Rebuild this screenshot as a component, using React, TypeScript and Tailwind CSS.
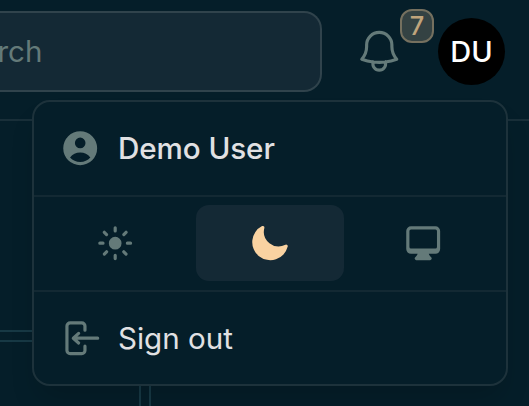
import type { ReactNode } from "react";

function MiniIcon({ children, className = "" }: { children: ReactNode; className?: string }) {
  return (
    <svg viewBox="0 0 20 20" fill="currentColor" className={`size-[42.4px] shrink-0 ${className}`} aria-hidden="true">
      {children}
    </svg>
  );
}

function Header() {
  return (
    <header className="flex h-[121px] items-start border-b-2 border-[#192f39] pt-[11px]">
      <div className="flex h-[81px] w-[322px] shrink-0 items-center rounded-r-[18px] border-y-2 border-r-2 border-[#30434c] bg-[#142935]">
        <span className="-ml-[60px] -mt-px w-[102.5px] text-right text-[29.6px] leading-10 text-[#647a79]">Search</span>
      </div>
      <button className="relative ml-[32px] mt-[15px] size-[50.5px] shrink-0 text-[#647a79]" aria-label="Notifications">
        <svg viewBox="0 0 24 24" fill="none" stroke="currentColor" strokeWidth="1.5" strokeLinecap="round" strokeLinejoin="round" className="size-full">
          <path d="M14.857 17.082a23.848 23.848 0 0 0 5.454-1.31A8.967 8.967 0 0 1 18 9.75V9A6 6 0 0 0 6 9v.75a8.967 8.967 0 0 1-2.312 6.022c1.733.64 3.56 1.085 5.455 1.31m5.714 0a24.255 24.255 0 0 1-5.714 0m5.714 0a3 3 0 1 1-5.714 0" />
        </svg>
        <span className="absolute -top-[17px] left-[46px] flex h-[34px] w-[34px] items-center justify-center rounded-[12px] border-2 border-[#75705f] bg-[#344243] text-[25.4px] font-medium leading-none text-[#c0a47c]">
          7
        </span>
      </button>
      <div className="ml-[33.5px] mt-[7px] flex size-[67px] shrink-0 items-center justify-center rounded-full bg-black text-[29px] font-medium text-white">
        DU
      </div>
    </header>
  );
}

function UserMenu() {
  return (
    <div className="absolute left-[31.5px] top-[100px] flex h-[286px] w-[476px] flex-col rounded-[18px] border-2 border-[#1d323b] bg-[#051e29] text-[29.6px] text-[#e1e1e3] shadow-[0_18px_28px_-6px_rgba(0,0,0,0.16)]">
      <div className="flex h-[93px] items-center gap-[17px] pl-[25px]">
        <MiniIcon className="text-[#647a79]">
          <path fillRule="evenodd" d="M18 10a8 8 0 1 1-16 0 8 8 0 0 1 16 0Zm-5.5-2.5a2.5 2.5 0 1 1-5 0 2.5 2.5 0 0 1 5 0ZM10 12a5.99 5.99 0 0 0-4.793 2.39A6.483 6.483 0 0 0 10 16.5a6.483 6.483 0 0 0 4.793-2.11A5.99 5.99 0 0 0 10 12Z" />
        </MiniIcon>
        <span className="font-medium tracking-[-0.06px]">Demo User</span>
      </div>
      <div className="grid h-[97px] grid-cols-3 gap-[6px] border-y-2 border-[#132933] px-[8px] pb-[9px] pt-[8px] text-[#647a79]">
        <button className="flex items-center justify-center rounded-[13px]" aria-label="Light theme">
          <MiniIcon>
            <path d="M10 2a.75.75 0 0 1 .75.75v1.5a.75.75 0 0 1-1.5 0v-1.5A.75.75 0 0 1 10 2ZM10 15a.75.75 0 0 1 .75.75v1.5a.75.75 0 0 1-1.5 0v-1.5A.75.75 0 0 1 10 15ZM10 7a3 3 0 1 0 0 6 3 3 0 0 0 0-6ZM15.657 5.404a.75.75 0 1 0-1.06-1.06l-1.061 1.06a.75.75 0 0 0 1.06 1.06l1.06-1.06ZM6.464 14.596a.75.75 0 1 0-1.06-1.06l-1.06 1.06a.75.75 0 0 0 1.06 1.06l1.06-1.06ZM18 10a.75.75 0 0 1-.75.75h-1.5a.75.75 0 0 1 0-1.5h1.5A.75.75 0 0 1 18 10ZM5 10a.75.75 0 0 1-.75.75h-1.5a.75.75 0 0 1 0-1.5h1.5A.75.75 0 0 1 5 10ZM14.596 15.657a.75.75 0 0 0 1.06-1.06l-1.06-1.061a.75.75 0 1 0-1.06 1.06l1.06 1.06ZM5.404 6.464a.75.75 0 0 0 1.06-1.06l-1.06-1.06a.75.75 0 1 0-1.061 1.06l1.06 1.06Z" />
          </MiniIcon>
        </button>
        <button className="flex items-center justify-center rounded-[13px] bg-[#142935] text-[#f9d2a1]" aria-label="Dark theme">
          <MiniIcon>
            <path fillRule="evenodd" d="M7.455 2.004a.75.75 0 0 1 .26.77 7 7 0 0 0 9.958 7.967.75.75 0 0 1 1.067.853A8.5 8.5 0 1 1 6.647 1.921a.75.75 0 0 1 .808.083Z" />
          </MiniIcon>
        </button>
        <button className="flex items-center justify-center rounded-[13px]" aria-label="System theme">
          <MiniIcon>
            <path fillRule="evenodd" d="M2 4.25A2.25 2.25 0 0 1 4.25 2h11.5A2.25 2.25 0 0 1 18 4.25v8.5A2.25 2.25 0 0 1 15.75 15h-3.105a3.501 3.501 0 0 0 1.1 1.677A.75.75 0 0 1 13.26 18H6.74a.75.75 0 0 1-.484-1.323A3.501 3.501 0 0 0 7.355 15H4.25A2.25 2.25 0 0 1 2 12.75v-8.5Zm1.5 0a.75.75 0 0 1 .75-.75h11.5a.75.75 0 0 1 .75.75v7.5a.75.75 0 0 1-.75.75H4.25a.75.75 0 0 1-.75-.75v-7.5Z" />
          </MiniIcon>
        </button>
      </div>
      <div className="flex flex-1 items-center gap-[17px] pl-[25px]">
        <MiniIcon className="text-[#647a79]">
          <path d="M3 4.25A2.25 2.25 0 0 1 5.25 2h5.5A2.25 2.25 0 0 1 13 4.25v2a.75.75 0 0 1-1.5 0v-2a.75.75 0 0 0-.75-.75h-5.5a.75.75 0 0 0-.75.75v11.5c0 .414.336.75.75.75h5.5a.75.75 0 0 0 .75-.75v-2a.75.75 0 0 1 1.5 0v2A2.25 2.25 0 0 1 10.75 18h-5.5A2.25 2.25 0 0 1 3 15.75V4.25Z" />
          <path d="M19 10a.75.75 0 0 0-.75-.75H8.704l1.048-.943a.75.75 0 1 0-1.004-1.114l-2.5 2.25a.75.75 0 0 0 0 1.114l2.5 2.25a.75.75 0 1 0 1.004-1.114l-1.048-.943h9.546A.75.75 0 0 0 19 10Z" />
        </MiniIcon>
        <span>Sign out</span>
      </div>
    </div>
  );
}

export default function App() {
  return (
    <div className="relative flex h-[406px] w-[529px] flex-col overflow-hidden bg-[#051e29] font-['Inter',sans-serif]">
      <Header />
      <main className="flex flex-1 flex-col">
        <div className="mt-[209px] h-[12px] w-[151px] border-y-2 border-[#173945]" />
        <div className="ml-[139px] w-[12px] flex-1 border-x-2 border-[#173945]" />
      </main>
      <UserMenu />
    </div>
  );
}
